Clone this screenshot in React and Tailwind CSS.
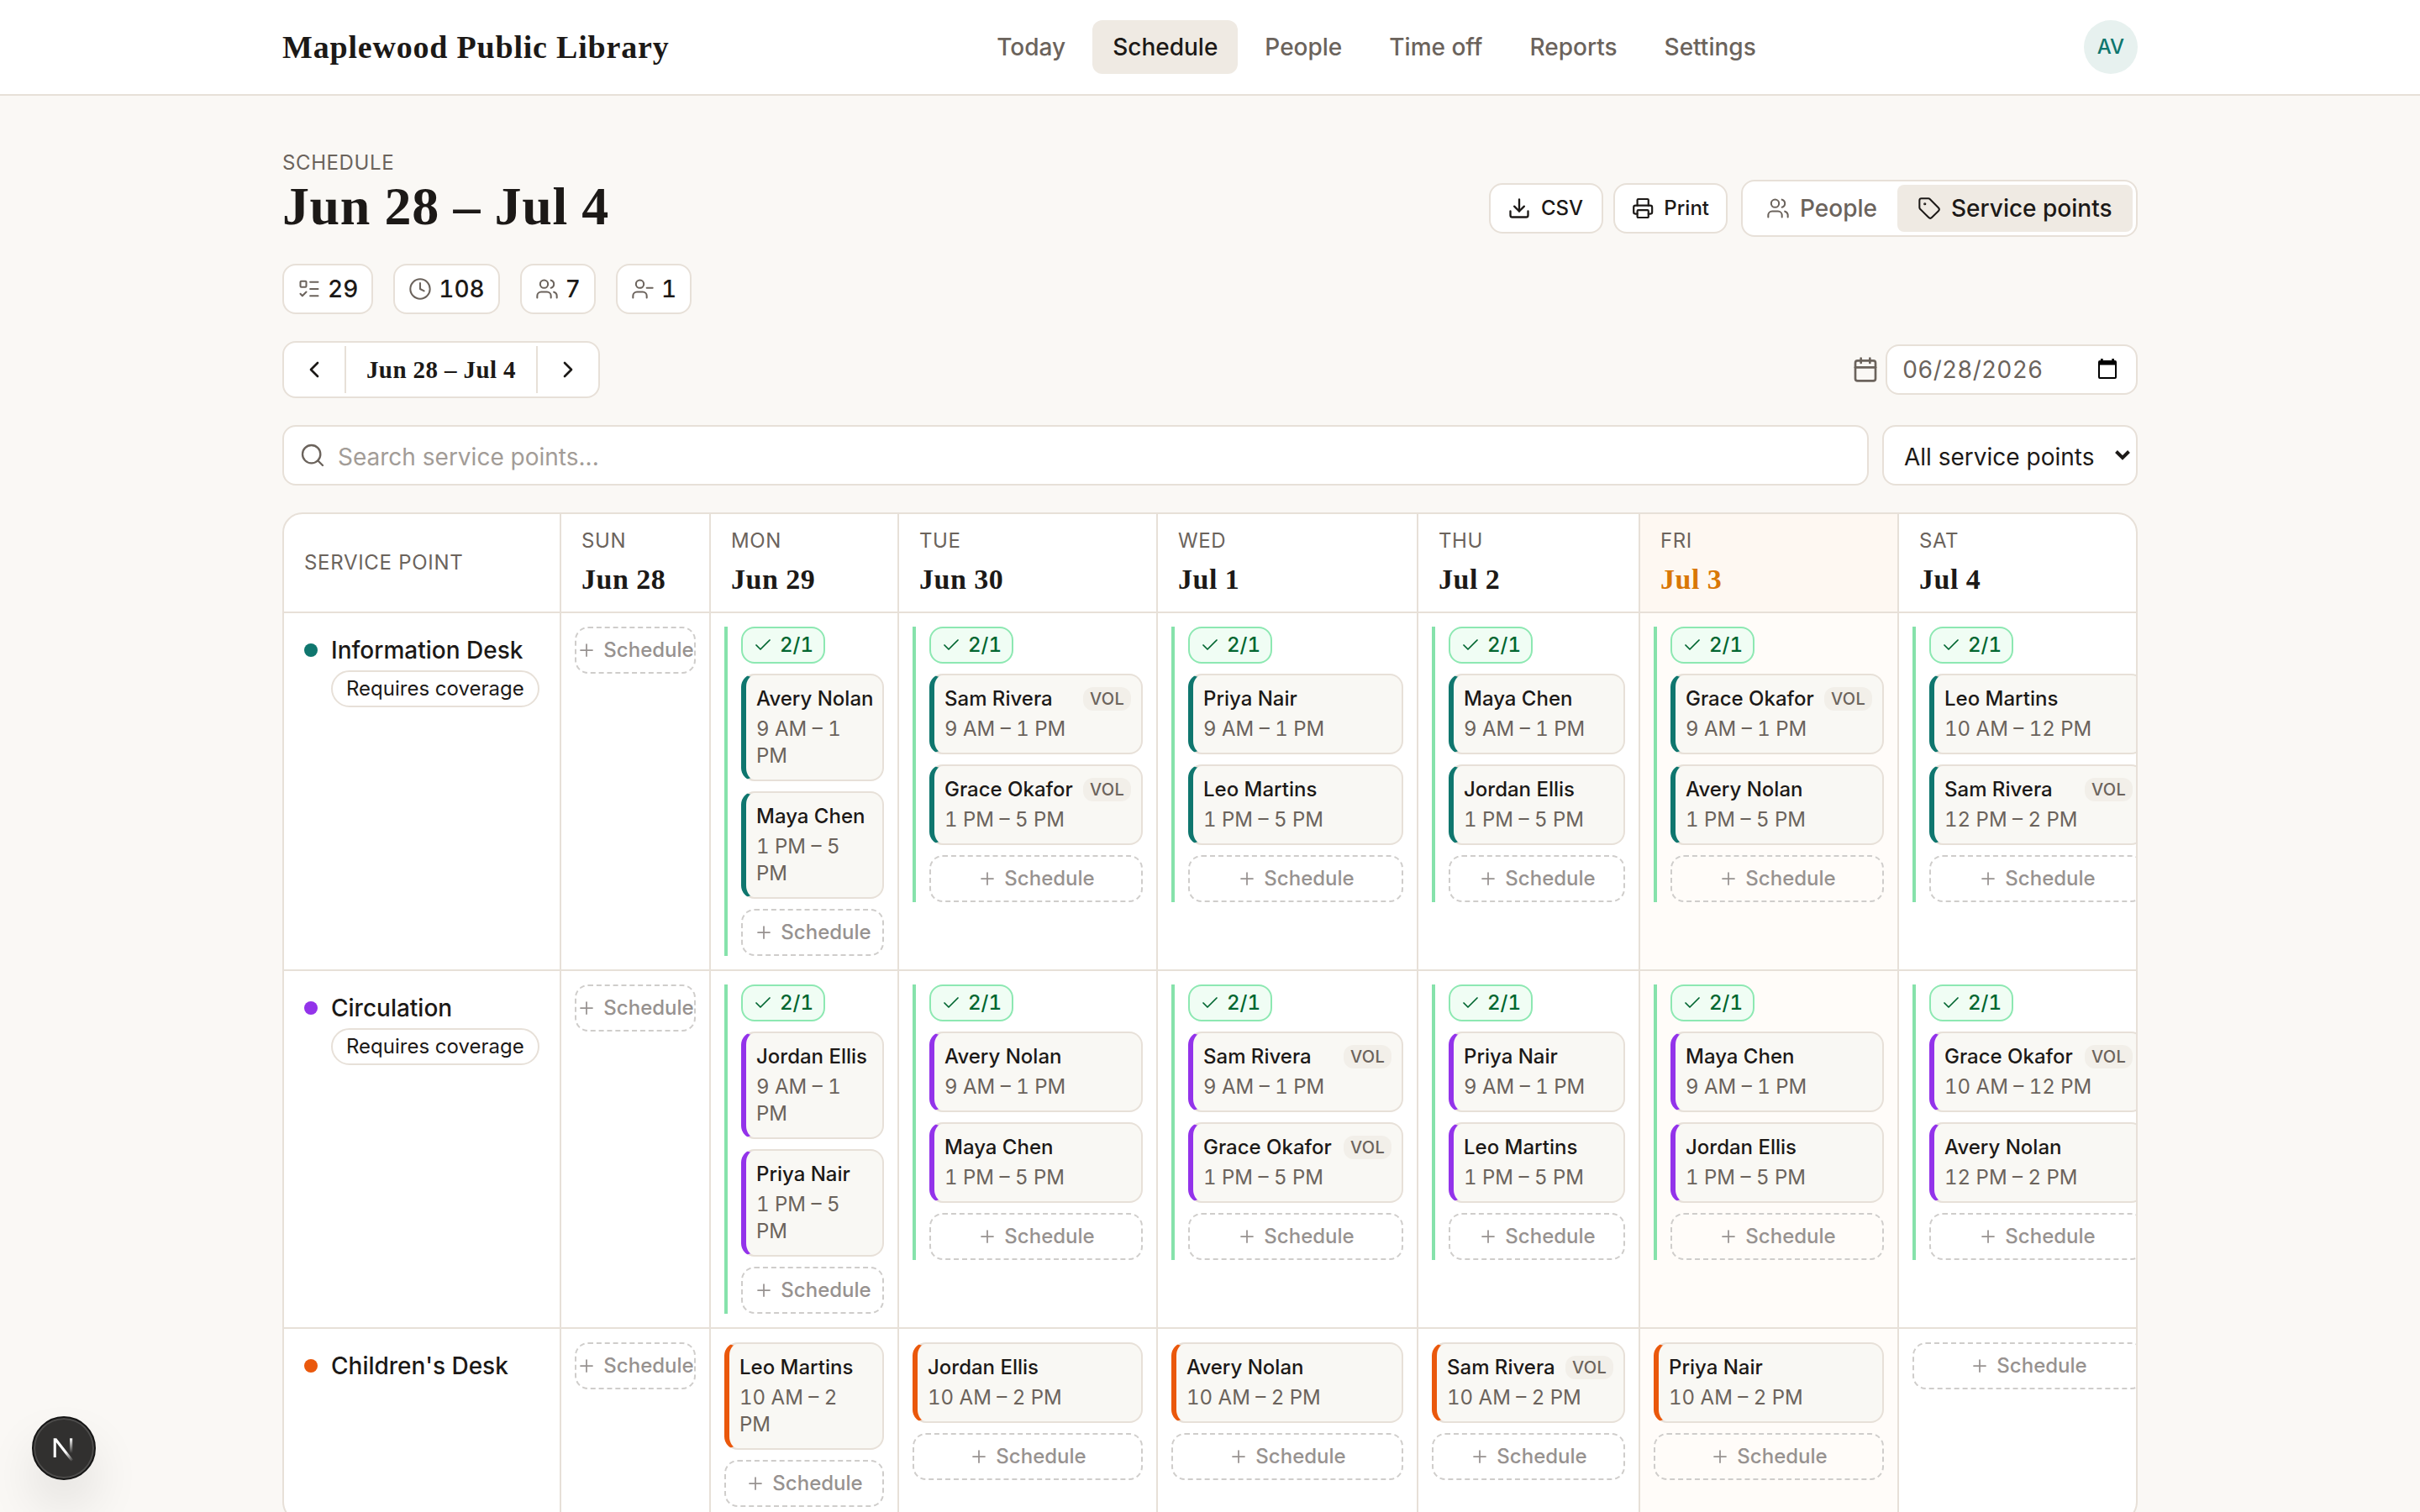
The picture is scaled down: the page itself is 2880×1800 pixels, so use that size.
import { useState } from "react";
import {
  Calendar,
  Check,
  ChevronLeft,
  ChevronRight,
  Clock,
  Download,
  ListTodo,
  Plus,
  Printer,
  Search,
  Tag,
  UserMinus,
  Users,
} from "lucide-react";
import clsx from "clsx";

const navItems = ["Today", "Schedule", "People", "Time off", "Reports", "Settings"];

const stats = [
  { icon: ListTodo, value: 29 },
  { icon: Clock, value: 108 },
  { icon: Users, value: 7 },
  { icon: UserMinus, value: 1 },
];

const days = [
  { name: "Sun", date: "Jun 28" },
  { name: "Mon", date: "Jun 29" },
  { name: "Tue", date: "Jun 30" },
  { name: "Wed", date: "Jul 1" },
  { name: "Thu", date: "Jul 2" },
  { name: "Fri", date: "Jul 3", today: true },
  { name: "Sat", date: "Jul 4" },
];

const volunteers = ["Sam Rivera", "Grace Okafor"];

const shift = (person, time) => ({ person, time });

const MORNING = "9 AM – 1 PM";
const AFTERNOON = "1 PM – 5 PM";
const MIDDAY = "10 AM – 2 PM";

const rows = [
  {
    name: "Information Desk",
    dot: "bg-[#0f766e]",
    edge: "border-l-[#0f766e]",
    required: true,
    cells: [
      [],
      [shift("Avery Nolan", MORNING), shift("Maya Chen", AFTERNOON)],
      [shift("Sam Rivera", MORNING), shift("Grace Okafor", AFTERNOON)],
      [shift("Priya Nair", MORNING), shift("Leo Martins", AFTERNOON)],
      [shift("Maya Chen", MORNING), shift("Jordan Ellis", AFTERNOON)],
      [shift("Grace Okafor", MORNING), shift("Avery Nolan", AFTERNOON)],
      [shift("Leo Martins", "10 AM – 12 PM"), shift("Sam Rivera", "12 PM – 2 PM")],
    ],
  },
  {
    name: "Circulation",
    dot: "bg-[#9333ea]",
    edge: "border-l-[#9333ea]",
    required: true,
    cells: [
      [],
      [shift("Jordan Ellis", MORNING), shift("Priya Nair", AFTERNOON)],
      [shift("Avery Nolan", MORNING), shift("Maya Chen", AFTERNOON)],
      [shift("Sam Rivera", MORNING), shift("Grace Okafor", AFTERNOON)],
      [shift("Priya Nair", MORNING), shift("Leo Martins", AFTERNOON)],
      [shift("Maya Chen", MORNING), shift("Jordan Ellis", AFTERNOON)],
      [shift("Grace Okafor", "10 AM – 12 PM"), shift("Avery Nolan", "12 PM – 2 PM")],
    ],
  },
  {
    name: "Children's Desk",
    dot: "bg-[#ea580c]",
    edge: "border-l-[#ea580c]",
    required: false,
    cells: [
      [],
      [shift("Leo Martins", MIDDAY)],
      [shift("Jordan Ellis", MIDDAY)],
      [shift("Avery Nolan", MIDDAY)],
      [shift("Sam Rivera", MIDDAY)],
      [shift("Priya Nair", MIDDAY)],
      [],
    ],
  },
];

const serif = "font-['Liberation_Serif',serif] font-bold";
const gridCols = "grid w-[2230px] grid-cols-[330px_178px_224px_308px_310px_264px_308px_308px]";

const Header = ({ active, onSelect }) => (
  <header className="h-[114px] border-b-2 border-[#e7e0d8] bg-white">
    <div className="mx-auto flex h-28 w-[2208px] items-center justify-between">
      <span className={clsx(serif, "w-[460px] text-[38px] leading-none tracking-[0.8px] whitespace-nowrap")}>
        Maplewood Public Library
      </span>
      <nav className="flex gap-2">
        {navItems.map((item) => (
          <button
            key={item}
            onClick={() => onSelect(item)}
            className={clsx(
              "h-16 rounded-xl px-6 text-[28px] font-medium",
              item === active ? "bg-[#efeae3] text-[#1c1917]" : "text-[#6b635c]"
            )}
          >
            {item}
          </button>
        ))}
      </nav>
      <div className="flex size-16 items-center justify-center rounded-full bg-[#e7f1ef] text-2xl font-medium text-[#0f766e]">
        AV
      </div>
    </div>
  </header>
);

const SmallButton = ({ icon: Icon, label }) => (
  <button className="flex h-15 w-[136px] items-center gap-3 rounded-2xl border-2 border-[#e7e0d8] bg-white px-5 text-2xl font-medium">
    <Icon size={28} strokeWidth={2} />
    {label}
  </button>
);

const TitleBar = () => (
  <div className="flex items-end justify-between">
    <div>
      <p className="text-2xl leading-8 tracking-[0.6px] text-[#6b635c]">SCHEDULE</p>
      <h1 className={clsx(serif, "text-[64px] leading-[72px] tracking-[0.6px]")}>Jun 28 – Jul 4</h1>
    </div>
    <div className="flex items-center gap-4">
      <div className="flex gap-3">
        <SmallButton icon={Download} label="CSV" />
        <SmallButton icon={Printer} label="Print" />
      </div>
      <div className="flex h-17 rounded-2xl border-2 border-[#e7e0d8] bg-white p-1 text-[28px] font-medium">
        <button className="flex w-[180px] items-center gap-3 px-6 text-[#6b635c]">
          <Users size={28} strokeWidth={1.75} className="shrink-0" />
          People
        </button>
        <button className="flex w-[280px] items-center gap-3 rounded-lg bg-[#efeae3] px-6 whitespace-nowrap">
          <Tag size={28} strokeWidth={1.75} className="shrink-0" />
          Service points
        </button>
      </div>
    </div>
  </div>
);

const Stats = () => (
  <div className="mt-8 flex gap-6">
    {stats.map(({ icon: Icon, value }) => (
      <div
        key={value}
        className="flex h-15 items-center gap-2 rounded-2xl border-2 border-[#e7e0d8] bg-white px-4 text-[28px] font-medium tabular-nums"
      >
        <Icon size={28} strokeWidth={1.75} className="text-[#6b635c]" />
        {value}
      </div>
    ))}
  </div>
);

const WeekPicker = () => (
  <div className="mt-8 flex items-center justify-between">
    <div className="flex h-17 gap-1 rounded-2xl border-2 border-[#e7e0d8] bg-white p-1">
      <button className="flex w-16 items-center justify-center">
        <ChevronLeft size={32} />
      </button>
      <div
        className={clsx(
          serif,
          "flex w-[230px] items-center justify-center border-x-2 border-[#e7e0d8] pt-0.5 text-[29px] tracking-[0.4px]"
        )}
      >
        Jun 28 – Jul 4
      </div>
      <button className="flex w-16 items-center justify-center">
        <ChevronRight size={32} />
      </button>
    </div>
    <div className="flex items-center gap-2 text-[#6b635c]">
      <Calendar size={32} strokeWidth={2} />
      <div className="flex h-15 w-[300px] items-center justify-between rounded-2xl border-2 border-[#e7e0d8] bg-white pr-[22px] pl-[18px] text-[28px] tracking-[0.2px] tabular-nums">
        06/28/2026
        <svg width="24" height="24" viewBox="0 0 24 24" className="mb-0.5">
          <path
            d="M1 4a2 2 0 0 1 2-2h1V0h2.700v2h10.600V0H20v2h1a2 2 0 0 1 2 2v18a2 2 0 0 1-2 2H3a2 2 0 0 1-2-2zM3 7.500V22h18V7.500z"
            fill="#000"
            fillRule="evenodd"
          />
        </svg>
      </div>
    </div>
  </div>
);

const Filters = () => (
  <div className="mt-8 flex h-18 gap-4 text-[28px]">
    <div className="flex flex-1 items-center gap-3.5 rounded-2xl border-2 border-[#e7e0d8] bg-white px-[18px]">
      <Search size={32} strokeWidth={1.75} className="text-[#6b635c]" />
      <span className="pt-1 text-[#a29c97]">Search service points...</span>
    </div>
    <div className="flex w-[304px] items-center justify-between rounded-2xl border-2 border-[#e7e0d8] bg-white pr-1.5 pl-6">
      <span className="pt-1">All service points</span>
      <svg width="20" height="14" viewBox="0 0 20 14" fill="none" stroke="#1c1917" strokeWidth="4">
        <path d="M2.500 2.500l7.500 7.500 7.500-7.500" />
      </svg>
    </div>
  </div>
);

const AddButton = () => (
  <button className="flex h-14 items-center justify-center gap-2 rounded-2xl border-2 border-dashed border-[#cfcdcb] text-2xl font-medium whitespace-nowrap text-[#979290]">
    <Plus size={24} strokeWidth={1.75} className="shrink-0" />
    Schedule
  </button>
);

const ShiftCard = ({ person, time, edge }) => (
  <div className={clsx("rounded-2xl border-2 border-l-6 border-[#e7e0d8] bg-[#f9f8f4] p-3 text-2xl leading-8", edge)}>
    <div className="flex items-center justify-between">
      <span className="font-medium whitespace-nowrap">{person}</span>
      {volunteers.includes(person) && (
        <span className="flex h-7 w-[57px] items-center justify-center rounded-xl bg-[#f2efe9] text-xl font-medium tracking-[0.3px] text-[#6b635c]">
          VOL
        </span>
      )}
    </div>
    <p className="mt-1 text-[#6b635c] tabular-nums">{time}</p>
  </div>
);

const Cell = ({ shifts, row, today, last }) => {
  const covered = row.required && shifts.length > 0;

  return (
    <div className={clsx("p-4", !last && "border-r-2 border-[#e7e0d8]", today && "bg-[#fffcf9]")}>
      <div className={clsx("flex flex-col gap-3", covered && "border-l-4 border-[#86e2ab] pl-4")}>
        {covered && (
          <div className="flex h-11 w-[100px] items-center gap-2 rounded-2xl border-2 border-[#8de8b2] bg-[#f0fdf4] px-3 text-2xl font-medium text-[#016630] tabular-nums">
            <Check size={24} strokeWidth={1.75} className="shrink-0" />
            {shifts.length}/1
          </div>
        )}
        {shifts.map((s) => (
          <ShiftCard key={s.person} {...s} edge={row.edge} />
        ))}
        <AddButton />
      </div>
    </div>
  );
};

const ScheduleTable = () => (
  <div className="mt-8 overflow-hidden rounded-3xl border-2 border-[#e7e0d8] bg-white">
    <div className={clsx(gridCols, "h-[118px] border-b-2 border-[#e7e0d8]")}>
      <div className="flex items-center border-r-2 border-[#e7e0d8] px-6 text-2xl tracking-[0.7px] text-[#6b635c]">
        SERVICE POINT
      </div>
      {days.map((day, i) => (
        <div
          key={day.name}
          className={clsx("px-6 pt-4", i < 6 && "border-r-2 border-[#e7e0d8]", day.today && "bg-[#fef8f2]")}
        >
          <p className="text-2xl leading-8 tracking-[0.6px] text-[#6b635c] uppercase">{day.name}</p>
          <p className={clsx(serif, "mt-1.5 text-[34px] leading-12 tracking-[0.5px]", day.today && "text-[#d97706]")}>
            {day.date}
          </p>
        </div>
      ))}
    </div>
    {rows.map((row, r) => (
      <div key={row.name} className={clsx(gridCols, r < rows.length - 1 && "border-b-2 border-[#e7e0d8]")}>
        <div className="flex gap-4 border-r-2 border-[#e7e0d8] p-6">
          <span className={clsx("mt-3 size-4 shrink-0 rounded-full", row.dot)} />
          <div>
            <p className="text-[28px] leading-10 font-medium">{row.name}</p>
            {row.required && (
              <span className="mt-1 flex h-11 items-center rounded-full border-2 border-[#e7e0d8] px-4 text-2xl whitespace-nowrap">
                Requires coverage
              </span>
            )}
          </div>
        </div>
        {row.cells.map((shifts, i) => (
          <Cell key={i} shifts={shifts} row={row} today={days[i].today} last={i === 6} />
        ))}
      </div>
    ))}
  </div>
);

const DevBadge = () => (
  <div className="absolute bottom-[38px] left-[38px] flex size-19 items-center justify-center rounded-full border-2 border-[#161616] bg-[#31302f] shadow-[inset_0_0_0_2px_#4d4c4b,0_32px_64px_-8px_rgba(0,0,0,0.16)]">
    <svg width="28" height="32" viewBox="0 0 28 32" fill="none">
      <defs>
        <linearGradient id="diagonal" x1="14" y1="18" x2="24" y2="32" gradientUnits="userSpaceOnUse">
          <stop offset="0.200" stopColor="#fff" />
          <stop offset="1" stopColor="#fff" stopOpacity="0" />
        </linearGradient>
        <linearGradient id="stem" x1="0" y1="4" x2="0" y2="22" gradientUnits="userSpaceOnUse">
          <stop stopColor="#fff" />
          <stop offset="1" stopColor="#fff" stopOpacity="0" />
        </linearGradient>
      </defs>
      <path d="M1.700 4.300H5.200L25 29.800L22.600 31.800L4.800 9V27H1.700z" fill="url(#diagonal)" />
      <rect x="21" y="4.300" width="3.200" height="18" fill="url(#stem)" />
    </svg>
  </div>
);

const App = () => {
  const [page, setPage] = useState("Schedule");

  return (
    <div className="relative h-[1800px] w-[2880px] overflow-hidden bg-[#faf8f5] font-['Inter',sans-serif] text-[#1c1917]">
      <Header active={page} onSelect={setPage} />
      <main className="mx-auto w-[2208px] pt-16">
        <TitleBar />
        <Stats />
        <WeekPicker />
        <Filters />
        <ScheduleTable />
      </main>
      <DevBadge />
    </div>
  );
};

export default App;
